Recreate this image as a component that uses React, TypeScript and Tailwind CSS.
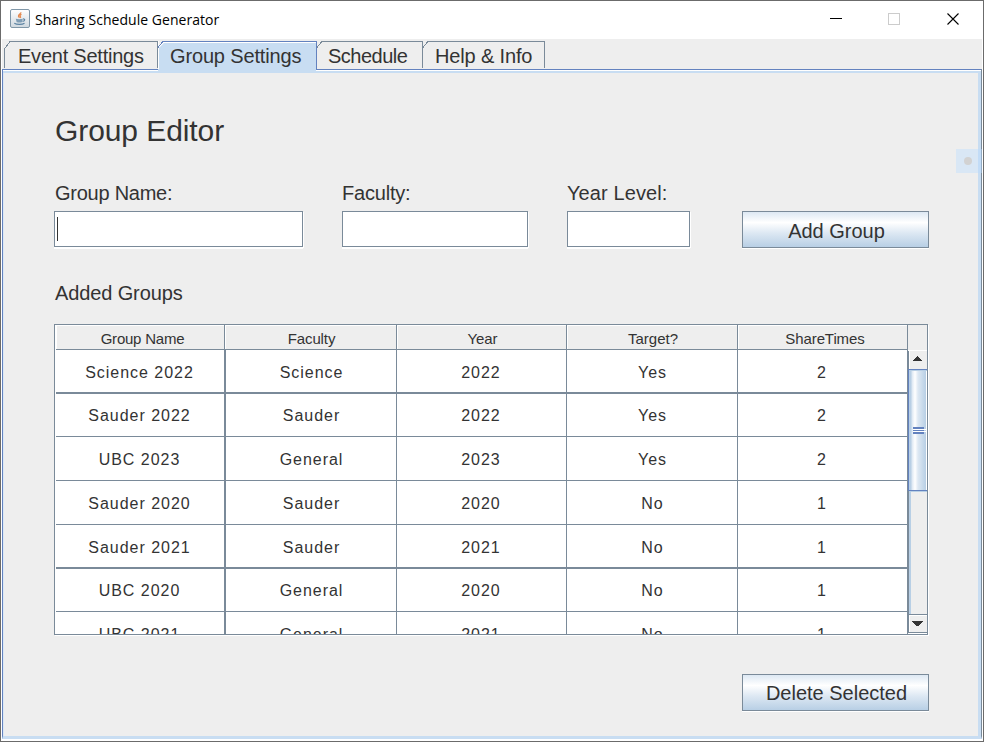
import React from "react";

const rows = [
  { cells: ["Science 2022", "Science", "2022", "Yes", "2"], box: "h-[44px] pt-[11px] border-b-2" },
  { cells: ["Sauder 2022", "Sauder", "2022", "Yes", "2"], box: "h-[43px] pt-[10px] border-b" },
  { cells: ["UBC 2023", "General", "2023", "Yes", "2"], box: "h-[44px] pt-[11px] border-b" },
  { cells: ["Sauder 2020", "Sauder", "2020", "No", "1"], box: "h-[44px] pt-[11px] border-b" },
  { cells: ["Sauder 2021", "Sauder", "2021", "No", "1"], box: "h-[44px] pt-[11px] border-b-2" },
  { cells: ["UBC 2020", "General", "2020", "No", "1"], box: "h-[43px] pt-[10px] border-b" },
  { cells: ["UBC 2021", "General", "2021", "No", "1"], box: "h-[44px] pt-[11px] border-b" },
];

const cellWidths = [
  "w-[170px] border-r-2 pr-px",
  "w-[171px] border-r pl-px",
  "w-[170px] border-r pr-px",
  "w-[171px] border-r pl-px",
  "w-[169px] pr-px",
];

const headers = [
  { label: "Group Name", box: "w-[169px] pl-[5px] tracking-[-0.22px]" },
  { label: "Faculty", box: "w-[172px] pl-[2px] tracking-[-0.1px]" },
  { label: "Year", box: "w-[170px] pl-[2px] tracking-[-0.1px]" },
  { label: "Target?", box: "w-[171px] pl-[2px] tracking-[0px]" },
  { label: "ShareTimes", box: "w-[170px] pl-[5px] tracking-[-0.1px]" },
];

function JavaIcon() {
  return (
    <svg width="20" height="19" viewBox="0 0 20 19">
      <defs>
        <linearGradient id="tile" x1="0" y1="0" x2="0" y2="1">
          <stop offset="0" stopColor="#ffffff" />
          <stop offset="1" stopColor="#cfd8df" />
        </linearGradient>
      </defs>
      <rect x="0.5" y="0.5" width="19" height="18" rx="1.5" fill="url(#tile)" stroke="#8097a8" />
      <path d="M10.800 3.200c.6 1.400-2.800 2.300-2.300 4 .2.700.9 1 .9 1.600M11.500 5.300c-1.500.6-1.800 1.500-1.100 2.300.4.500.1.900-.3 1.200" fill="none" stroke="#e58a50" strokeWidth="1.300" />
      <path d="M5.800 9.700c2 .7 5 .6 7 0l-.6 3.200c-1.500.7-4 .7-5.600 0z" fill="#7f9db5" />
      <path d="M13 10c2.400-.4 2.200 2-.4 2.500M4.300 14.300c2.500 1.500 8 1.400 10.200 0" fill="none" stroke="#5d84a3" strokeWidth="1.200" />
    </svg>
  );
}

function TabCorner({ color }: { color: string }) {
  return (
    <svg className="shrink-0" width="5" height="7" shapeRendering="crispEdges">
      <path d="M0 6.500L5 .5" stroke={color} fill="none" />
    </svg>
  );
}

function Tab({ label, box }: { label: string; box: string }) {
  return (
    <div className={"flex h-[28px] " + box}>
      <TabCorner color="#7a8a99" />
      <div className="h-[27px] flex-1 whitespace-nowrap border-t border-r border-[#7a8a99] text-[20px] leading-[28px]">{label}</div>
    </div>
  );
}

function Field({ label, box, caret }: { label: string; box: string; caret?: boolean }) {
  return (
    <div className={box}>
      <div className="h-[30px] whitespace-nowrap text-[20px] leading-[24px]">{label}</div>
      <div className="flex h-[36px] border border-[#7a8a99] bg-white pl-[2px] pt-[5px] shadow-[1px_1px_0_#fff,0_2px_0_#fff]">
        {caret && <div className="h-[24px] w-px bg-[#333]" />}
      </div>
    </div>
  );
}

function MetalButton({ label, box }: { label: string; box: string }) {
  return (
    <button
      className={
        "h-[37px] w-[187px] border border-[#7a8a99] bg-[linear-gradient(180deg,#dde8f3_0%,#ffffff_30%,#dde8f3_60%,#b8cfe5_100%)] text-[20px] leading-[24px] text-[#333] shadow-[0_1px_0_#fff] " +
        box
      }
    >
      {label}
    </button>
  );
}

function ScrollBar() {
  return (
    <div className="flex w-[19px] flex-col">
      <div className="h-[26px] border-b border-white bg-[#eee]" />
      <div className="flex h-[18px] items-start border-l border-[#7a8a99] bg-[#eee] pl-[4px] pt-[5px] shadow-[inset_1px_0_0_#fff]">
        <svg width="9" height="5" shapeRendering="crispEdges">
          <path d="M4 0h1v1h1v1h1v1h1v1h1v1H0V4h1V3h1V2h1V1h1z" fill="#333" />
        </svg>
      </div>
      <div className="flex h-[122px] flex-col items-start justify-center border border-r-0 border-[#6382bf] bg-[linear-gradient(90deg,#b8cfe5_0px,#b8cfe5_2px,#dde8f3_3px,#ffffff_6px,#dde8f3_9px,#b8cfe5_17px,#ffffff_17px)] pl-[4px] shadow-[inset_0_1px_0_#b8cfe5]">
        <div className="h-[2px] w-[11px] bg-[#6382bf]" />
        <div className="h-px w-[13px] bg-white" />
        <div className="h-px w-[11px] bg-[#6382bf]" />
        <div className="h-px w-[13px] bg-white" />
        <div className="h-[2px] w-[11px] bg-[#6382bf]" />
      </div>
      <div className="h-[123px] border-l border-[#7a8a99] bg-[#eee] shadow-[inset_0_1px_0_#b8cfe5]">
        <div className="h-full w-[2px] bg-[#b8cfe5]" />
      </div>
      <div className="flex h-[19px] items-start border-y border-l border-[#7a8a99] bg-[#eee] pl-[3px] pt-[6px] shadow-[inset_1px_1px_0_#fff]">
        <svg width="11" height="5" shapeRendering="crispEdges">
          <path d="M0 0h11v1h-1v1H9v1H8v1H7v1H4V4H3V3H2V2H1V1H0z" fill="#333" />
        </svg>
      </div>
    </div>
  );
}

export default function App() {
  return (
    <div className="relative flex h-[742px] w-[984px] flex-col overflow-hidden border border-[#6b6b6b] bg-white font-['Liberation_Sans',Arial,sans-serif] text-[#333]">
      <div className="flex h-[38px] shrink-0 items-start pl-[9px] pt-[8px]">
        <JavaIcon />
        <div className="ml-[5px] w-[795px] whitespace-nowrap font-['Open_Sans',sans-serif] text-[14px] leading-[22px] tracking-[0.04px] text-black">
          Sharing Schedule Generator
        </div>
        <div className="mt-[9px] h-px w-[12px] bg-black" />
        <div className="ml-[46px] mt-[4px] h-[12px] w-[12px] border border-[#ccc]" />
        <svg className="ml-[47px] mt-[4px]" width="12" height="12">
          <path d="M.5.5l11 11M11.500.5l-11 11" stroke="#000" strokeWidth="1.100" />
        </svg>
      </div>

      <div className="ml-px mr-px flex h-[30px] shrink-0 items-start bg-[#eee] pl-[2px] pt-[2px]">
        <div className="flex h-[28px] w-[154px]">
          <svg className="shrink-0" width="6" height="28" shapeRendering="crispEdges">
            <path d="M.5 27V8L6 .5" fill="none" stroke="#7a8a99" />
          </svg>
          <div className="h-[27px] flex-1 whitespace-nowrap border-r border-t border-[#7a8a99] pl-[8px] text-[20px] leading-[28px] tracking-[-0.23px]">
            Event Settings
          </div>
        </div>
        <div className="flex h-[28px] w-[159px] bg-[linear-gradient(135deg,#eee_4px,#fff_5px,#c8ddf2_6px)] shadow-[inset_1px_0_0_#fff]">
          <TabCorner color="#6382bf" />
          <div className="flex-1 whitespace-nowrap border-r border-t border-[#6382bf] pl-[7px] text-[20px] leading-[28px] tracking-[-0.15px] shadow-[inset_0_1px_0_#fff]">
            Group Settings
          </div>
        </div>
        <Tab label="Schedule" box="w-[106px] [&>div]:pl-[6px] tracking-[-0.5px]" />
        <Tab label="Help & Info" box="w-[122px] [&>div]:pl-[7px] tracking-[-0.15px]" />
      </div>

      <div className="ml-px mr-px flex h-[4px] w-[980px] shrink-0 items-start border-l border-r border-l-[#6382bf] border-r-[#7a8a99] bg-[#c8ddf2]">
        <div className="h-[2px] w-[155px] border-b border-t border-b-white border-t-[#6382bf]" />
        <div className="h-[2px] w-[158px]" />
        <div className="h-[2px] flex-1 border-b border-t border-b-white border-t-[#6382bf]" />
      </div>

      <div className="ml-px mr-px flex h-[666px] shrink-0 flex-col border-b-[3px] border-l border-r border-b-[#c8ddf2] border-l-[#6382bf] border-r-[#7a8a99]">
        <div className="flex flex-1 flex-col border-r-[3px] border-[#c8ddf2] bg-[#eee] pl-[51px] shadow-[inset_1px_0_0_#dce8f5]">
          <h1 className="mt-[43px] h-[65px] pl-px text-[30px] leading-[30px] tracking-[-0.08px]">Group Editor</h1>
          <div className="flex h-[66px]">
            <Field label="Group Name:" box="w-[249px] tracking-[-0.25px] [&>div:first-child]:pl-px" caret />
            <Field label="Faculty:" box="ml-[39px] w-[186px] tracking-[-0.2px]" />
            <Field label="Year Level:" box="ml-[39px] w-[123px] tracking-[0.1px]" />
            <MetalButton label="Add Group" box="ml-[52px] mt-[30px] pl-[8px] pr-[6px] pt-[3px]" />
          </div>
          <h2 className="mt-[34px] h-[43px] pl-px text-[20px] leading-[24px] tracking-[-0.12px]">Added Groups</h2>

          <div className="flex h-[311px] w-[874px] border border-[#7a8a99] bg-white pl-px shadow-[1px_1px_0_#fff]">
            <div className="flex w-[852px] flex-col overflow-hidden">
              <div className="flex h-[25px] shrink-0">
                {headers.map((h) => (
                  <div
                    key={h.label}
                    className={
                      "border-b border-r border-[#7a8a99] bg-[#eee] text-center text-[15px] leading-[27px] shadow-[inset_1px_1px_0_#fff] " +
                      h.box
                    }
                  >
                    {h.label}
                  </div>
                ))}
              </div>
              <div className="h-[284px] overflow-hidden border-r border-[#7a8a99]">
                {rows.map((row) => (
                  <div key={row.cells[0]} className="flex w-[851px]">
                    {row.cells.map((cell, i) => (
                      <div
                        key={i}
                        className={"border-[#7a8a99] text-center text-[16px] leading-[24px] tracking-[0.97px] " + row.box + " " + cellWidths[i]}
                      >
                        {cell}
                      </div>
                    ))}
                  </div>
                ))}
              </div>
            </div>
            <ScrollBar />
          </div>

          <MetalButton label="Delete Selected" box="ml-[688px] mt-[39px] pl-[8px] pr-[6px] pt-[1px]" />
        </div>
      </div>

      <div className="absolute left-[955px] top-[148px] flex h-[24px] w-[26px] items-center bg-[#b8dcff]/40 pl-[8px]">
        <div className="h-[8px] w-[8px] rounded-full bg-[#d2d2d2]" />
      </div>
    </div>
  );
}
